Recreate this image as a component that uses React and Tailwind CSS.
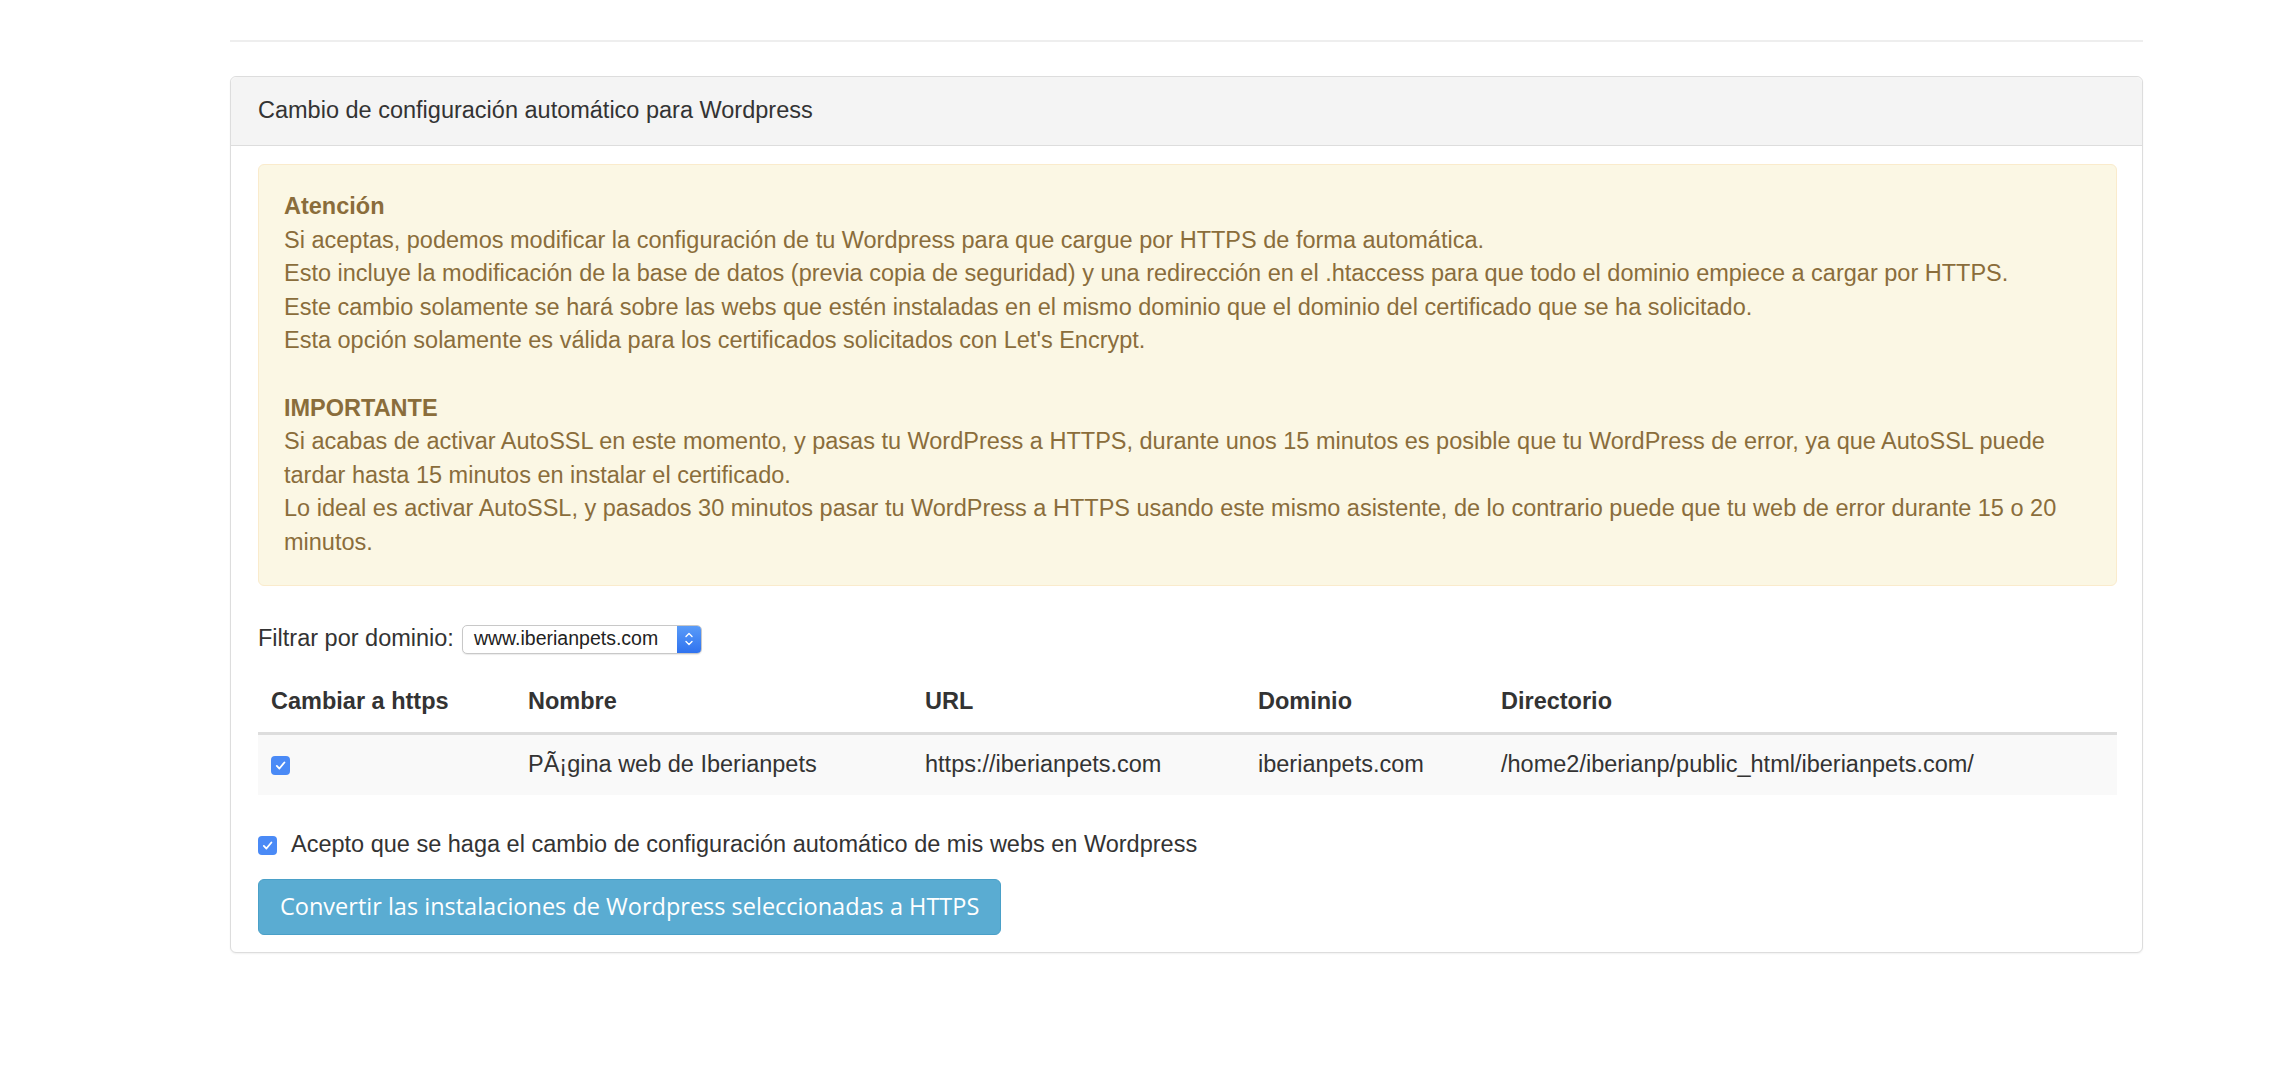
import React from 'react';

function Check({ size = 19 }) {
  return (
    <span
      className="inline-flex items-center justify-center rounded-[4px] bg-[#4a8af6] shrink-0"
      style={{ width: size, height: size }}
    >
      <svg width={size - 6} height={size - 6} viewBox="0 0 12 12" fill="none">
        <path d="M2.6 6.4 L5 8.8 L9.6 3.2" stroke="#fff" strokeWidth="1.7" strokeLinecap="round" strokeLinejoin="round" />
      </svg>
    </span>
  );
}

export default function App() {
  const cols = [
    { label: 'Cambiar a https', w: 'w-[257px]' },
    { label: 'Nombre', w: 'w-[397px]' },
    { label: 'URL', w: 'w-[333px]' },
    { label: 'Dominio', w: 'w-[243px]' },
    { label: 'Directorio', w: '' },
  ];

  return (
    <div className="min-h-[1080px] w-full bg-white font-['Liberation_Sans',Arial,sans-serif] text-[#333333]">
      <div className="ml-[230px] w-[1913px] pt-[40px]">
        <div className="h-[2px] bg-[#eeeeee]"></div>

        <div className="mt-[34px] rounded-[6px] border border-[#dddddd] bg-white shadow-[0_1px_2px_rgba(0,0,0,0.06)]">
          <div className="flex h-[69px] items-center rounded-t-[6px] border-b border-[#dddddd] bg-[#f4f4f4] px-[27px] text-[23.5px]">
            Cambio de configuración automático para Wordpress
          </div>

          <div className="pl-[27px] pr-[25px] pt-[18px] pb-[17px]">
            <div className="rounded-[6px] border border-[#faebcc] bg-[#fbf7e4] px-[25px] py-[25px] text-[23.5px] leading-[33.6px] text-[#8a6d3b]">
              <div className="font-bold">Atención</div>
              <div>Si aceptas, podemos modificar la configuración de tu Wordpress para que cargue por HTTPS de forma automática.</div>
              <div>Esto incluye la modificación de la base de datos (previa copia de seguridad) y una redirección en el .htaccess para que todo el dominio empiece a cargar por HTTPS.</div>
              <div>Este cambio solamente se hará sobre las webs que estén instaladas en el mismo dominio que el dominio del certificado que se ha solicitado.</div>
              <div>Esta opción solamente es válida para los certificados solicitados con Let's Encrypt.</div>
              <div className="h-[33.6px]"></div>
              <div className="font-bold">IMPORTANTE</div>
              <div className="whitespace-nowrap">Si acabas de activar AutoSSL en este momento, y pasas tu WordPress a HTTPS, durante unos 15 minutos es posible que tu WordPress de error, ya que AutoSSL puede</div>
              <div>tardar hasta 15 minutos en instalar el certificado.</div>
              <div className="whitespace-nowrap">Lo ideal es activar AutoSSL, y pasados 30 minutos pasar tu WordPress a HTTPS usando este mismo asistente, de lo contrario puede que tu web de error durante 15 o 20</div>
              <div>minutos.</div>
            </div>

            <div className="mt-[39px] flex h-[29px] items-center gap-[8px] text-[23.5px]">
              <span>Filtrar por dominio:</span>
              <div className="flex h-[29px] w-[240px] items-stretch overflow-hidden rounded-[5px] border border-[#c8c8c8] bg-white shadow-[0_1px_1px_rgba(0,0,0,0.08)]">
                <span className="flex flex-1 items-center pl-[11px] text-[19.5px] text-[#222]">www.iberianpets.com</span>
                <span className="flex w-[24px] items-center justify-center bg-gradient-to-b from-[#5a9bf8] to-[#2f72ef]">
                  <svg width="10" height="18" viewBox="0 0 10 18" fill="none">
                    <path d="M2 6.5 L5 3.5 L8 6.5" stroke="#fff" strokeWidth="1.4" strokeLinecap="round" strokeLinejoin="round" />
                    <path d="M2 11.5 L5 14.5 L8 11.5" stroke="#fff" strokeWidth="1.4" strokeLinecap="round" strokeLinejoin="round" />
                  </svg>
                </span>
              </div>
            </div>

            <table className="mt-[18px] w-full border-collapse text-left text-[23.5px] leading-[33.6px]">
              <thead>
                <tr className="border-b-[3px] border-[#dddddd]">
                  {cols.map((c) => (
                    <th key={c.label} className={`${c.w} px-[13px] py-[13.4px] font-bold`}>
                      {c.label}
                    </th>
                  ))}
                </tr>
              </thead>
              <tbody>
                <tr className="bg-[#f9f9f9]">
                  <td className="px-[13px] py-[13.4px]">
                    <span className="flex h-[33.6px] items-center">
                      <Check size={19} />
                    </span>
                  </td>
                  <td className="px-[13px] py-[13.4px]">PÃ¡gina web de Iberianpets</td>
                  <td className="px-[13px] py-[13.4px]">https://iberianpets.com</td>
                  <td className="px-[13px] py-[13.4px]">iberianpets.com</td>
                  <td className="px-[13px] py-[13.4px]">/home2/iberianp/public_html/iberianpets.com/</td>
                </tr>
              </tbody>
            </table>

            <div className="mt-[33px] flex h-[33.6px] items-center gap-[14px] text-[23.5px]">
              <Check size={19} />
              <span>Acepto que se haga el cambio de configuración automático de mis webs en Wordpress</span>
            </div>

            <button className="mt-[17px] flex h-[56px] items-center rounded-[6px] border border-[#4aa0c8] bg-[#5aacd2] px-[21px] font-['Open_Sans',sans-serif] text-[23.5px] text-white">
              Convertir las instalaciones de Wordpress seleccionadas a HTTPS
            </button>
          </div>
        </div>
      </div>
    </div>
  );
}
